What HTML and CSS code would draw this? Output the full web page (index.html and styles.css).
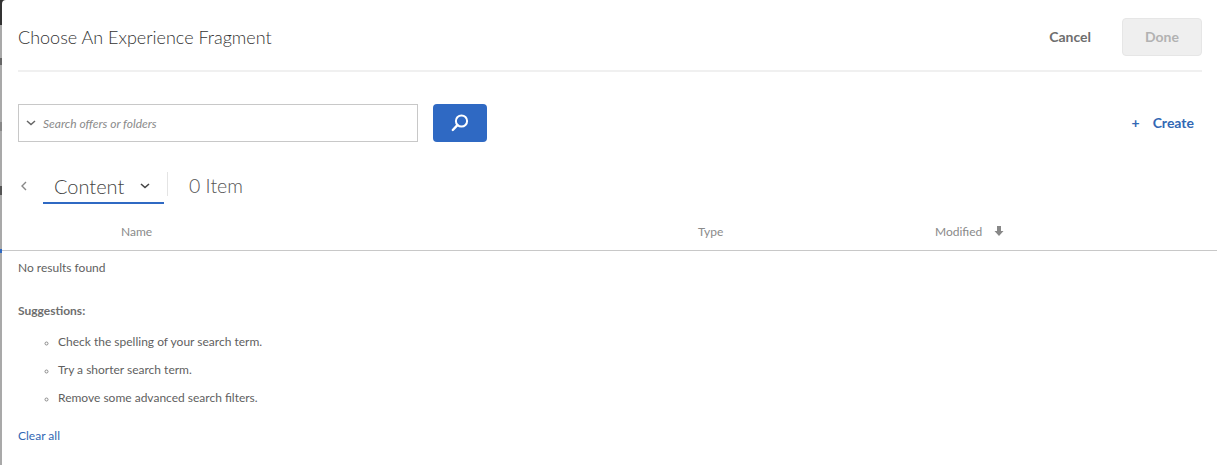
FILE: index.html
```html
<!DOCTYPE html>
<html lang="en">
<head>
    <meta charset="UTF-8">
    <title>Choose An Experience Fragment</title>
    <link rel="stylesheet" href="styles.css">
</head>
<body>
    <div class="modal">
        <header class="modal-header">
            <h1>Choose An Experience Fragment</h1>
            <div class="header-actions">
                <button class="cancel-button">Cancel</button>
                <button class="done-button" disabled>Done</button>
            </div>
        </header>
        <div class="search-row">
            <div class="search-field">
                <svg class="chevron" width="10" height="6" viewBox="0 0 10 6"><path d="M1 1l4 3.5L9 1" fill="none" stroke="#666" stroke-width="1.5"/></svg>
                <span class="placeholder">Search offers or folders</span>
            </div>
            <button class="search-button">
                <svg width="20" height="20" viewBox="0 0 20 20"><circle cx="11.5" cy="8" r="5.6" fill="none" stroke="#fff" stroke-width="2"/><path d="M7.4 12.2L2.8 17" stroke="#fff" stroke-width="2.4" stroke-linecap="round"/></svg>
            </button>
            <a class="create-link" href="#"><span class="plus">+</span>Create</a>
        </div>
        <div class="breadcrumb-row">
            <svg class="back" width="7" height="10" viewBox="0 0 7 10"><path d="M6 1L2 5l4 4" fill="none" stroke="#888" stroke-width="1.4"/></svg>
            <div class="folder-select">
                <span>Content</span>
                <svg width="10" height="6" viewBox="0 0 10 6"><path d="M1 1l4 3.5L9 1" fill="none" stroke="#444" stroke-width="1.6"/></svg>
            </div>
            <div class="item-count">0 Item</div>
        </div>
        <div class="table-head">
            <div class="col-name">Name</div>
            <div class="col-type">Type</div>
            <div class="col-modified">Modified
                <svg width="10" height="12" viewBox="0 0 10 12"><path d="M3 1h4v5h2.5L5 11 .5 6H3z" fill="#888"/></svg>
            </div>
        </div>
        <div class="results">
            <p class="no-results">No results found</p>
            <p class="suggestions-title">Suggestions:</p>
            <ul class="suggestions">
                <li>Check the spelling of your search term.</li>
                <li>Try a shorter search term.</li>
                <li>Remove some advanced search filters.</li>
            </ul>
            <a class="clear-all" href="#">Clear all</a>
        </div>
    </div>
</body>
</html>
```

FILE: styles.css
```css
html, body {
  height: 100%;
}

/* the page behind the dialog only shows as a thin strip on the left */
body {
  margin: 0;
  padding-left: 2px;
  background: linear-gradient(to bottom,
    #333 0, #333 25px,
    #a9a9a9 25px, #a9a9a9 58px,
    #666 58px, #666 65px,
    #a9a9a9 65px, #a9a9a9 122px,
    #888 122px, #888 131px,
    #a9a9a9 131px, #a9a9a9 186px,
    #555 186px, #555 195px,
    #a9a9a9 195px, #a9a9a9 249px,
    #2f69c3 249px, #2f69c3 253px,
    #a9a9a9 253px);
  font-family: "Lato", "Open Sans", sans-serif;
  font-size: 12px;
  color: #5f5f5f;
  overflow: hidden;
}

.modal {
  height: 465px;
  background-color: #fff;
  border-top-left-radius: 4px;
}

.modal-header {
  display: flex;
  justify-content: space-between;
  align-items: center;
  height: 72px;
  box-sizing: border-box;
  margin: 0 15px 0 16px;
  padding-top: 3px;
  border-bottom: 2px solid #f0f0f0;
}

h1 {
  margin: 0;
  padding-top: 1px;
  font-size: 18px;
  font-weight: 300;
  color: #333;
}

.header-actions {
  display: flex;
  align-items: center;
  gap: 31px;
}

button {
  font-family: inherit;
  font-size: 14px;
  font-weight: 700;
  border: none;
  background: none;
}

.cancel-button {
  padding: 0;
  color: #6e6e6e;
}

.done-button {
  width: 80px;
  height: 38px;
  border: 1px solid #e6e6e6;
  border-radius: 4px;
  background-color: #efefef;
  color: #b2b2b2;
}

.search-row {
  display: flex;
  align-items: center;
  margin: 32px 23px 0 16px;
}

.search-field {
  display: flex;
  align-items: center;
  width: 400px;
  height: 38px;
  box-sizing: border-box;
  padding-left: 7px;
  border: 1px solid #c8c8c8;
}

.chevron {
  margin-right: 7px;
}

.placeholder {
  font-style: italic;
  color: #8a8a8a;
}

.search-button {
  display: flex;
  align-items: center;
  justify-content: center;
  width: 54px;
  height: 38px;
  margin-left: 15px;
  padding: 0;
  border-radius: 4px;
  background-color: #2f69c3;
}

.create-link {
  margin-left: auto;
  margin-bottom: 2px;
  font-size: 14px;
  font-weight: 700;
  color: #3268b4;
  text-decoration: none;
}

.plus {
  margin-right: 13px;
}

.breadcrumb-row {
  display: flex;
  align-items: center;
  height: 36px;
  margin: 26px 0 0 18px;
}

.back {
  margin-right: 16px;
}

.folder-select {
  display: flex;
  align-items: center;
  justify-content: space-between;
  width: 121px;
  height: 36px;
  box-sizing: border-box;
  padding: 2px 14px 0 11px;
  border-bottom: 2px solid #2f69c3;
  font-size: 20px;
  font-weight: 300;
  color: #444;
}

.item-count {
  height: 24px;
  margin: 0 0 4px 3px;
  padding-left: 21px;
  border-left: 1px solid #e4e4e4;
  font-size: 19.5px;
  font-weight: 300;
  line-height: 28px;
  color: #555;
}

.table-head {
  display: flex;
  align-items: center;
  height: 47px;
  box-sizing: border-box;
  padding-top: 8px;
  border-bottom: 1px solid #c8c8c8;
  color: #8a8a8a;
}

.col-name {
  width: 577px;
  padding-left: 119px;
}

.col-type {
  width: 237px;
}

.col-modified svg {
  margin-left: 9px;
  vertical-align: -1px;
}

.results {
  padding-left: 16px;
}

.results p {
  margin: 0;
}

.no-results {
  padding-top: 9px;
  line-height: 16px;
}

.suggestions-title {
  padding-top: 27px;
  line-height: 16px;
  font-weight: 700;
  color: #6e6e6e;
}

.suggestions {
  margin: 15px 0 0;
  padding-left: 40px;
  list-style-type: circle;
}

.suggestions li {
  height: 28px;
  line-height: 16px;
}

.suggestions li::marker {
  font-size: 10px;
  color: #8a8a8a;
}

.clear-all {
  display: block;
  margin-top: 10px;
  line-height: 16px;
  color: #3268b4;
  text-decoration: none;
}
```
